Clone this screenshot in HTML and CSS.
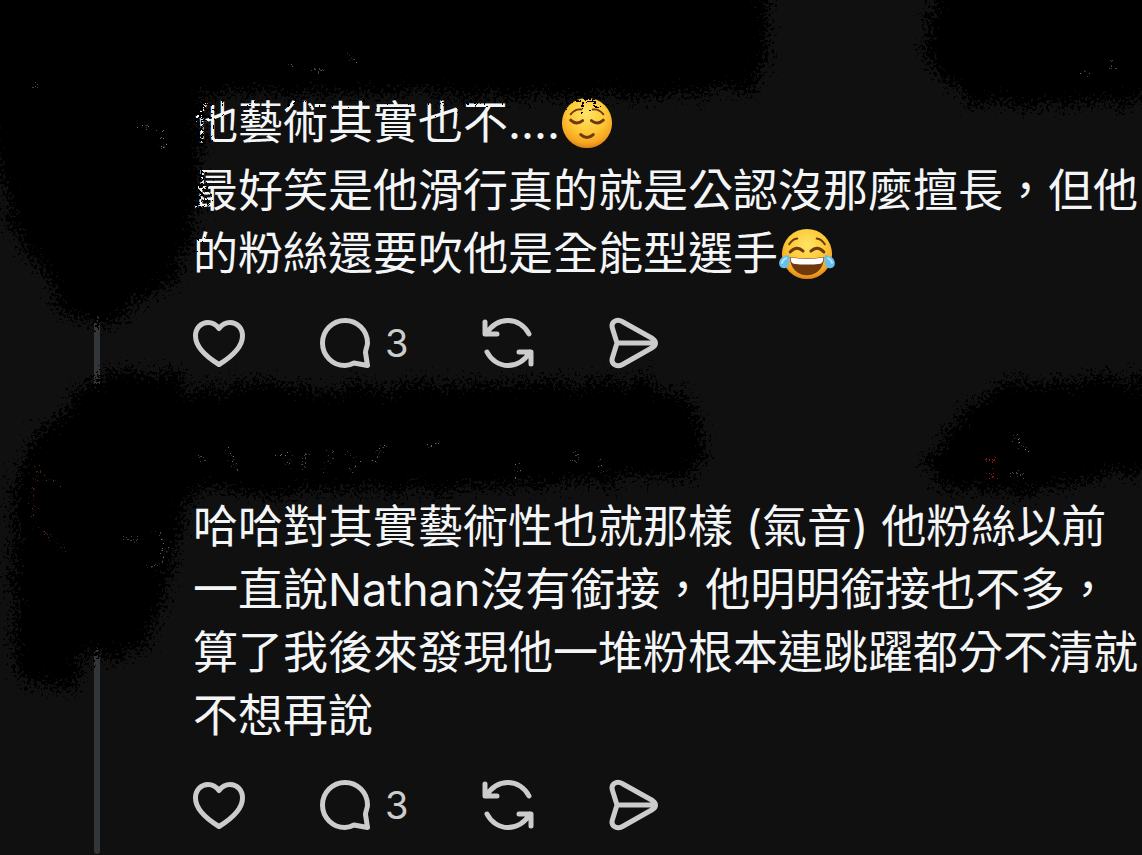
FILE: index.html
```html
<!doctype html>
<html lang="zh-Hant">
<head>
	<meta charset="UTF-8">
	<meta name="viewport" content="width=device-width,initial-scale=1.0">
	<title>串文</title>
	<link rel="stylesheet" href="styles.css">
</head>
<body>
	<!-- shared icons -->
	<svg class="defs" aria-hidden="true">
		<symbol id="heart" viewBox="0 0 52 52">
			<path d="M26 11.5C23 7.5 19 5.5 15 5.5C8 5.5 2.5 11 2.5 19C2.5 30 13 39.5 26 47.5C39 39.5 49.5 30 49.5 19C49.5 11 44 5.5 37 5.5C33 5.5 29 7.5 26 11.5Z"/>
		</symbol>
		<symbol id="comment" viewBox="0 0 52 52">
			<path d="M35 46C32 47.5 29 48.5 26 48.5A22.5 22.5 0 1 1 48.5 26C48.5 29.500 46.500 32 46.500 35.500L48.500 48.500Z"/>
		</symbol>
		<symbol id="repost" viewBox="0 0 52 52">
			<path d="M47 17C43 9 35 3.500 26 3.500C16 3.500 9 9 4 17M3 5V17H15M5 35C9 43 17 48.500 26 48.500C36 48.500 43 43 48 35M49 47V35H37"/>
		</symbol>
		<symbol id="send" viewBox="0 0 52 52">
			<path d="M9 26H47M14.500 4.700L44.500 21.500C48.500 24 48.500 28 44.500 30.500L14.500 47.500C8 51 2.500 46.500 4.500 40.500L9 26L4.500 11.500C2.500 5.500 8 1 14.500 4.700Z"/>
		</symbol>
	</svg>

	<main class="feed">
		<article class="post">
			<div class="rail"><span class="line"></span></div>
			<div class="body">
				<div class="text">
					<p>他藝術其實也不....<svg class="emoji" viewBox="0 0 56 56" role="img" aria-label="鬆一口氣">
						<defs>
							<radialGradient id="face" cx="50%" cy="32%" r="68%">
								<stop offset="0" stop-color="#ffe467"/>
								<stop offset=".55" stop-color="#fdc835"/>
								<stop offset=".85" stop-color="#f6a522"/>
								<stop offset="1" stop-color="#dc8116"/>
							</radialGradient>
						</defs>
						<circle cx="28" cy="28" r="26" fill="url(#face)"/>
						<g class="brown">
							<path d="M11 19Q16 13 22 14M34 14Q40 13 45 19" stroke-width="2"/>
							<path d="M11 25Q17 30.500 23.500 25.500M32.500 25.500Q39 30.500 45 25"/>
							<path d="M21.500 40Q28 46 34.500 40"/>
						</g>
					</svg></p>
					<p>最好笑是他滑行真的就是公認沒那麼擅長，但他的粉絲還要吹他是全能型選手<svg class="emoji wide" viewBox="0 0 60 56" role="img" aria-label="笑到流淚">
						<circle cx="30" cy="28" r="26" fill="url(#face)"/>
						<g class="brown">
							<path d="M11.500 18Q15 12.500 20 12M40 12Q45 12.500 48.500 18" stroke-width="2"/>
							<path d="M12.500 26Q19 18.500 26 25M34 25Q41 18.500 47.500 26"/>
						</g>
						<path d="M12 31Q30 34 48 31C47 43 40 50 30 50S13 43 12 31Z" fill="#70380d"/>
						<path d="M13 31.500Q30 34.500 47 31.500Q47 37 44 38Q30 40 16 38Q13 37 13 31.500Z" fill="#fff"/>
						<path d="M11 29C3 30 0 35 1.500 40C4 45 11 43 11.500 37C12 34 12 31 11 29ZM49 29C57 30 60 35 58.500 40C56 45 49 43 48.500 37C48 34 48 31 49 29Z" fill="#66bfec"/>
						<path d="M9 32C5 34 4 36 4 38M51 32C55 34 56 36 56 38" fill="none" stroke="#b5e7fb" stroke-width="2"/>
					</svg></p>
				</div>
				<div class="actions">
					<button type="button" aria-label="讚"><svg class="icon"><use href="#heart"/></svg></button>
					<button type="button" aria-label="回覆 3"><svg class="icon"><use href="#comment"/></svg><span>3</span></button>
					<button type="button" aria-label="轉發"><svg class="icon"><use href="#repost"/></svg></button>
					<button type="button" aria-label="分享"><svg class="icon"><use href="#send"/></svg></button>
				</div>
			</div>
		</article>

		<article class="post">
			<div class="rail"><span class="line"></span></div>
			<div class="body">
				<div class="text">
					<p>哈哈對其實藝術性也就那樣 (氣音) 他粉絲以前一直說Nathan沒有銜接，他明明銜接也不多，算了我後來發現他一堆粉根本連跳躍都分不清就不想再說</p>
				</div>
				<div class="actions">
					<button type="button" aria-label="讚"><svg class="icon"><use href="#heart"/></svg></button>
					<button type="button" aria-label="回覆 3"><svg class="icon"><use href="#comment"/></svg><span>3</span></button>
					<button type="button" aria-label="轉發"><svg class="icon"><use href="#repost"/></svg></button>
					<button type="button" aria-label="分享"><svg class="icon"><use href="#send"/></svg></button>
				</div>
			</div>
		</article>

		<!-- brush strokes over the names and avatars -->
		<svg class="brush" aria-hidden="true">
			<defs>
				<filter id="spray" x="-10%" y="-10%" width="120%" height="120%">
					<feTurbulence type="fractalNoise" baseFrequency=".06" numOctaves="2" seed="4" result="wave"/>
					<feTurbulence type="fractalNoise" baseFrequency=".32" numOctaves="3" seed="9" result="grain"/>
					<feDisplacementMap in="SourceGraphic" in2="wave" scale="30" xChannelSelector="R" yChannelSelector="G" result="soft"/>
					<feDisplacementMap in="soft" in2="grain" scale="46" xChannelSelector="R" yChannelSelector="G"/>
				</filter>
				<filter id="crumbs" x="-20%" y="-20%" width="140%" height="140%">
					<feTurbulence type="fractalNoise" baseFrequency=".5" numOctaves="2" seed="3"/>
					<feDisplacementMap in="SourceGraphic" scale="18" xChannelSelector="R" yChannelSelector="G"/>
				</filter>
			</defs>
			<g filter="url(#spray)">
				<path d="M-30 -30H770L768 50L752 90L650 97L500 97L250 93L203 96L202 180L194 240L172 280L138 300L108 328L65 316L50 280L12 225L-6 150Z"/>
				<path d="M938 -30H1180V92L1120 102L970 104L934 76L926 45Z"/>
				<path d="M68 405L98 378L140 368L176 376L200 392L235 380L300 386L400 384L550 382L655 382L690 398L702 430L702 465L680 478L500 488L300 492L188 494L174 560L160 610L145 645L110 658L84 650L74 688L30 686L14 670L14 470L42 430Z"/>
				<path d="M926 462L954 420L1000 386L1080 380H1180V462L1070 484L1000 493L940 488Z"/>
			</g>
			<g class="crumbs" filter="url(#crumbs)">
				<path d="M32 87H39M136 128L148 125M160 132L164 150M290 64L295 66M314 70H322M346 52L358 65"/>
				<path d="M122 540H142M155 530Q170 548 162 560Q156 570 146 568"/>
				<path d="M198 458H206M228 450L238 470M275 456Q290 450 290 468M305 452V470M322 470L334 450M346 450Q366 465 348 470M375 462L385 444M430 446L440 442M515 478L520 462M575 450V462M600 460L603 472"/>
				<path d="M1012 434L1026 450M1012 474H1026M1084 70L1090 74M1112 60V68"/>
				<path class="rust" d="M40 465Q28 500 36 525M42 530L66 552M48 478L60 486"/>
				<path class="red" d="M984 460L996 458M988 473L998 475"/>
			</g>
		</svg>
	</main>
</body>
</html>
```
FILE: styles.css
```css
*{
	padding: 0;
	margin: 0;
	box-sizing: border-box;
}
body{
	background: #101010;
	color: #f3f5f7;
	font-family: Inter, "Noto Sans CJK TC", sans-serif;
}
.defs{
	display: block;
	width: 0;
	height: 0;
}

.feed{
	position: relative;
	display: flex;
	flex-direction: column;
	gap: 10px;
	overflow: hidden;
}
.post{
	display: grid;
	grid-template-columns: 193px 1fr;
}
.rail{
	display: flex;
	justify-content: center;
	padding: 130px 0 2px;
}
.line{
	width: 6px;
	border-radius: 3px;
	background: #323639;
}
.body{
	padding: 91px 0 25px;
}

.text{
	display: flex;
	flex-direction: column;
	gap: 5px;
	font-size: 45px;
	line-height: 63px;
}
.emoji{
	width: 54px;
	height: 54px;
	vertical-align: -11px;
}
.wide{
	width: 58px;
}
.brown{
	fill: none;
	stroke: #70380d;
	stroke-width: 3;
	stroke-linecap: round;
}

.actions{
	display: flex;
	gap: 74px;
	margin-top: 32px;
}
button{
	display: flex;
	align-items: center;
	gap: 14px;
	border: 0;
	background: none;
	color: #ccc;
	font: inherit;
	font-size: 38px;
	line-height: 52px;
	cursor: pointer;
}
.icon{
	width: 52px;
	height: 52px;
	fill: none;
	stroke: #ccc;
	stroke-width: 5;
	stroke-linecap: round;
	stroke-linejoin: round;
}

.brush{
	position: absolute;
	top: 0;
	left: 0;
	width: 100%;
	height: 100%;
	pointer-events: none;
}
.crumbs{
	fill: none;
	stroke: #8a8a8a;
	stroke-width: 1;
	stroke-dasharray: 2 3;
}
.rust{
	stroke: #7a3a2a;
}
.red{
	stroke: #a01818;
	stroke-width: 2;
}
```
